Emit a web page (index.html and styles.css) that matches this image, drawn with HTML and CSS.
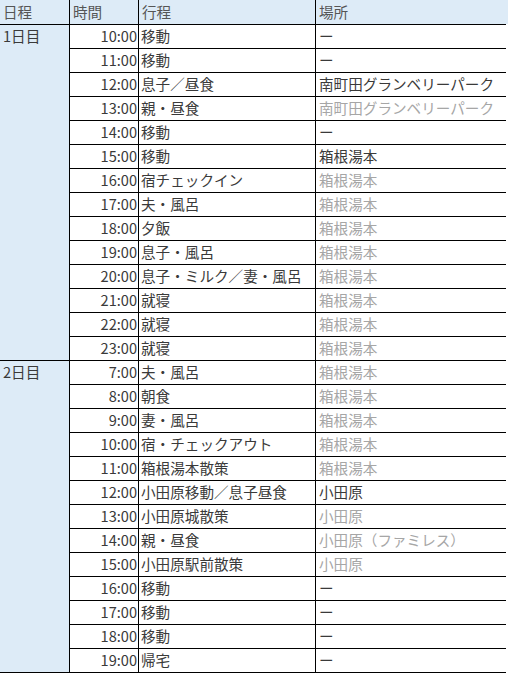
FILE: index.html
```html
<!DOCTYPE html>
<html lang="ja">
<head>
<meta charset="utf-8">
<link rel="stylesheet" href="styles.css">
</head>
<body>
<div class="sheet">
  <div class="cell head">日程</div>
  <div class="cell head">時間</div>
  <div class="cell head">行程</div>
  <div class="cell head">場所</div>

  <div class="cell day day1">1日目</div>
  <div class="cell time">10:00</div><div class="cell">移動</div><div class="cell place">ー</div>
  <div class="cell time">11:00</div><div class="cell">移動</div><div class="cell place">ー</div>
  <div class="cell time">12:00</div><div class="cell">息子／昼食</div><div class="cell place">南町田グランベリーパーク</div>
  <div class="cell time">13:00</div><div class="cell">親・昼食</div><div class="cell place muted">南町田グランベリーパーク</div>
  <div class="cell time">14:00</div><div class="cell">移動</div><div class="cell place">ー</div>
  <div class="cell time">15:00</div><div class="cell">移動</div><div class="cell place">箱根湯本</div>
  <div class="cell time">16:00</div><div class="cell">宿チェックイン</div><div class="cell place muted">箱根湯本</div>
  <div class="cell time">17:00</div><div class="cell">夫・風呂</div><div class="cell place muted">箱根湯本</div>
  <div class="cell time">18:00</div><div class="cell">夕飯</div><div class="cell place muted">箱根湯本</div>
  <div class="cell time">19:00</div><div class="cell">息子・風呂</div><div class="cell place muted">箱根湯本</div>
  <div class="cell time">20:00</div><div class="cell">息子・ミルク／妻・風呂</div><div class="cell place muted">箱根湯本</div>
  <div class="cell time">21:00</div><div class="cell">就寝</div><div class="cell place muted">箱根湯本</div>
  <div class="cell time">22:00</div><div class="cell">就寝</div><div class="cell place muted">箱根湯本</div>
  <div class="cell time">23:00</div><div class="cell">就寝</div><div class="cell place muted">箱根湯本</div>

  <div class="cell day day2">2日目</div>
  <div class="cell time">7:00</div><div class="cell">夫・風呂</div><div class="cell place muted">箱根湯本</div>
  <div class="cell time">8:00</div><div class="cell">朝食</div><div class="cell place muted">箱根湯本</div>
  <div class="cell time">9:00</div><div class="cell">妻・風呂</div><div class="cell place muted">箱根湯本</div>
  <div class="cell time">10:00</div><div class="cell">宿・チェックアウト</div><div class="cell place muted">箱根湯本</div>
  <div class="cell time">11:00</div><div class="cell">箱根湯本散策</div><div class="cell place muted">箱根湯本</div>
  <div class="cell time">12:00</div><div class="cell">小田原移動／息子昼食</div><div class="cell place">小田原</div>
  <div class="cell time">13:00</div><div class="cell">小田原城散策</div><div class="cell place muted">小田原</div>
  <div class="cell time">14:00</div><div class="cell">親・昼食</div><div class="cell place muted">小田原（ファミレス）</div>
  <div class="cell time">15:00</div><div class="cell">小田原駅前散策</div><div class="cell place muted">小田原</div>
  <div class="cell time">16:00</div><div class="cell">移動</div><div class="cell place">ー</div>
  <div class="cell time">17:00</div><div class="cell">移動</div><div class="cell place">ー</div>
  <div class="cell time">18:00</div><div class="cell">移動</div><div class="cell place">ー</div>
  <div class="cell time">19:00</div><div class="cell">帰宅</div><div class="cell place">ー</div>
</div>
</body>
</html>
```
FILE: styles.css
```css
html, body {
  margin: 0;
  padding: 0;
  background: #ffffff;
}

.sheet {
  display: grid;
  grid-template-columns: 69px 68px 176px 192px;
  grid-template-rows: 24px repeat(27, 23px);
  gap: 1px;
  width: 505px;
  padding: 0 1px 1px 0;
  background: #000000;
  font-family: "Noto Sans CJK JP", "Noto Sans", sans-serif;
  font-size: 14.6px;
  color: #3a3a3a;
}

.cell {
  background: #ffffff;
  line-height: 21px;
  padding: 0 2px;
  white-space: nowrap;
  overflow: hidden;
}

.head {
  background: #ddebf7;
  line-height: 24px;
  padding-left: 3px;
  color: #555555;
}

.day {
  background: #ddebf7;
  padding-left: 3px;
}

.day1 {
  grid-row: 2 / span 14;
}

.day2 {
  grid-row: 16 / span 13;
}

.time {
  text-align: right;
  padding-right: 1px;
}

.place {
  padding-left: 3px;
}

.muted {
  color: #a6a6a6;
}
```
